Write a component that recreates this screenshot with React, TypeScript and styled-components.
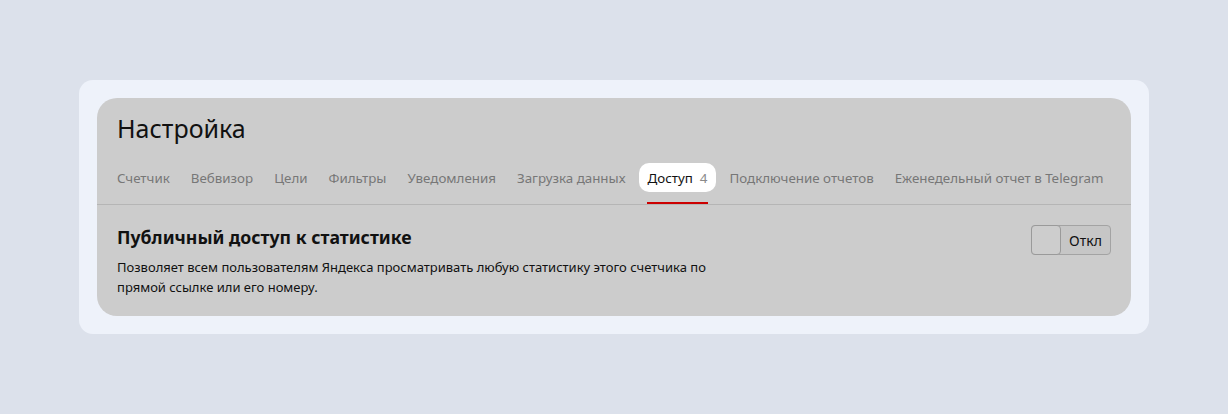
import React from "react";
import styled, { createGlobalStyle } from "styled-components";

const Global = createGlobalStyle`
  html, body { margin: 0; padding: 0; background: #dce1eb; }
  body { font-family: "Noto Sans", "Open Sans", sans-serif; -webkit-font-smoothing: antialiased; }
`;

const Page = styled.div`
  width: 1228px;
  height: 414px;
  padding: 80px 0 0 79px;
  box-sizing: border-box;
`;

const Outer = styled.div`
  width: 1070px;
  height: 254px;
  box-sizing: border-box;
  background: #eef2fa;
  border-radius: 14px;
  padding: 18px;
`;

const Panel = styled.div`
  background: #cccccc;
  border-radius: 20px;
  height: 218px;
  display: flex;
  flex-direction: column;
`;

const Header = styled.div`
  padding: 14px 20px 0;
  border-bottom: 1px solid #b5b5b5;
  display: flex;
  flex-direction: column;
  gap: 19px;
`;

const Title = styled.h1`
  margin: 0;
  font-size: 25px;
  line-height: 32px;
  font-weight: 400;
  color: #111;
`;

const Tabs = styled.nav`
  display: flex;
  align-items: center;
  gap: 5px;
  margin-left: -8px;
  padding-bottom: 12px;
`;

const Tab = styled.div<{ $active?: boolean }>`
  position: relative;
  height: 29px;
  padding: 0 ${(p) => (p.$active ? "9px" : "8px")};
  display: flex;
  align-items: center;
  gap: 7px;
  font-size: 13.35px;
  color: ${(p) => (p.$active ? "#111" : "#777")};
  background: ${(p) => (p.$active ? "#ffffff" : "transparent")};
  border-radius: 10px;
  white-space: nowrap;
`;

const Count = styled.span`
  color: #8a8a8a;
`;

const Underline = styled.span`
  position: absolute;
  left: 8px;
  right: 8px;
  bottom: -12px;
  height: 2px;
  background: #cc0000;
`;

const Body = styled.div`
  padding: 18px 20px 0;
  display: flex;
  justify-content: space-between;
  align-items: flex-start;
`;

const Info = styled.div`
  display: flex;
  flex-direction: column;
  gap: 6px;
`;

const Heading = styled.h2`
  margin: 0;
  font-size: 17.7px;
  line-height: 28px;
  font-weight: 700;
  color: #111;
`;

const Desc = styled.p`
  margin: 0;
  font-size: 13px;
  line-height: 20px;
  color: #111;
  max-width: 600px;
`;

const Toggle = styled.button`
  margin-top: 2px;
  width: 80px;
  height: 30px;
  box-sizing: border-box;
  display: flex;
  align-items: stretch;
  padding: 0;
  border: 1px solid #a3a3a3;
  border-radius: 4px;
  background: #c6c6c6;
  font-family: inherit;
  cursor: pointer;
`;

const Knob = styled.span`
  width: 28px;
  margin: -1px 0 -1px -1px;
  border: 1px solid #9a9a9a;
  border-radius: 4px;
  background: #cdcdcd;
`;

const ToggleLabel = styled.span`
  flex: 1;
  display: flex;
  align-items: center;
  justify-content: center;
  font-size: 14px;
  color: #111;
`;

const tabs = [
  "Счетчик",
  "Вебвизор",
  "Цели",
  "Фильтры",
  "Уведомления",
  "Загрузка данных",
];
const tabsAfter = ["Подключение отчетов", "Еженедельный отчет в Telegram"];

export default function App() {
  return (
    <Page>
      <Global />
      <Outer>
        <Panel>
          <Header>
            <Title>Настройка</Title>
            <Tabs>
              {tabs.map((t) => (
                <Tab key={t}>{t}</Tab>
              ))}
              <Tab $active>
                Доступ <Count>4</Count>
                <Underline />
              </Tab>
              {tabsAfter.map((t) => (
                <Tab key={t}>{t}</Tab>
              ))}
            </Tabs>
          </Header>
          <Body>
            <Info>
              <Heading>Публичный доступ к статистике</Heading>
              <Desc>
                Позволяет всем пользователям Яндекса просматривать любую статистику этого счетчика по
                прямой ссылке или его номеру.
              </Desc>
            </Info>
            <Toggle>
              <Knob />
              <ToggleLabel>Откл</ToggleLabel>
            </Toggle>
          </Body>
        </Panel>
      </Outer>
    </Page>
  );
}
